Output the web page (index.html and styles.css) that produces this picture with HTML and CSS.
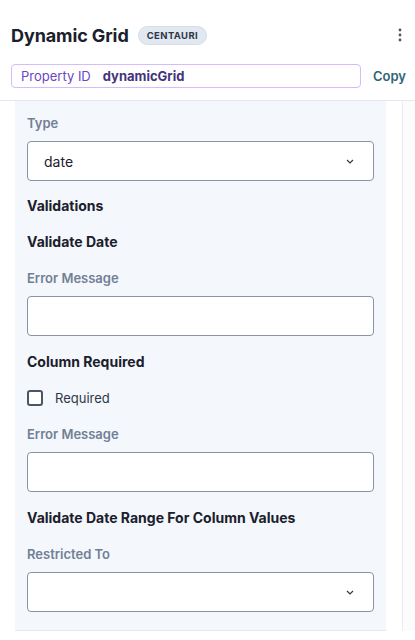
FILE: index.html
```html
<!DOCTYPE html>
<html lang="en">
<head>
    <meta charset="UTF-8">
    <meta name="viewport" content="width=device-width, initial-scale=1.0">
    <title>Dynamic Grid</title>
    <link rel="stylesheet" href="styles.css">
</head>
<body>
    <div class="header">
        <div class="title-row">
            <h1>Dynamic Grid</h1>
            <span class="badge">CENTAURI</span>
            <button class="kebab" aria-label="More">
                <svg width="4" height="14" viewBox="0 0 4 14"><circle cx="2" cy="2" r="1.4"/><circle cx="2" cy="7" r="1.4"/><circle cx="2" cy="12" r="1.4"/></svg>
            </button>
        </div>
        <div class="id-row">
            <div class="prop-id">
                <span class="prop-label">Property ID</span>
                <span class="prop-value">dynamicGrid</span>
            </div>
            <a class="copy" href="#">Copy</a>
        </div>
    </div>

    <div class="body">
        <div class="panel">
            <div class="form-group first">
                <label>Type</label>
                <div class="select">
                    <span>date</span>
                    <svg class="chev" width="8" height="5" viewBox="0 0 8 5"><path d="M1 1l3 3 3-3" fill="none" stroke="#2d3748" stroke-width="1.2"/></svg>
                </div>
            </div>
            <h3>Validations</h3>
            <h3>Validate Date</h3>
            <div class="form-group">
                <label>Error Message</label>
                <input type="text">
            </div>
            <h3>Column Required</h3>
            <label class="check">
                <span class="box"></span>
                Required
            </label>
            <div class="form-group">
                <label>Error Message</label>
                <input type="text">
            </div>
            <h3>Validate Date Range For Column Values</h3>
            <div class="form-group">
                <label>Restricted To</label>
                <div class="select">
                    <span></span>
                    <svg class="chev" width="8" height="5" viewBox="0 0 8 5"><path d="M1 1l3 3 3-3" fill="none" stroke="#2d3748" stroke-width="1.2"/></svg>
                </div>
            </div>
        </div>
        <div class="scroll-track"></div>
    </div>
</body>
</html>
```

FILE: styles.css
```css
body {
    font-family: Inter, "Liberation Sans", sans-serif;
    margin: 0;
    background-color: #fff;
    color: #1a202c;
}
.header {
    padding: 0 9px 12px 11px;
    border-bottom: 1px solid #e2e8f0;
}
.title-row {
    display: flex;
    align-items: center;
    height: 44px;
    padding-top: 13px;
}
h1 {
    font-size: 18px;
    font-weight: 700;
    margin: 0;
    letter-spacing: -0.1px;
}
.badge {
    margin-left: 9px;
    background-color: #e2e8f0;
    border: 1px solid #d5dde8;
    color: #2d3748;
    font-size: 9.5px;
    font-weight: 700;
    letter-spacing: 0.4px;
    padding: 3px 8px;
    border-radius: 10px;
}
.kebab {
    margin-left: auto;
    background: none;
    border: none;
    padding: 0 4px;
    fill: #4a5568;
    cursor: pointer;
    display: flex;
}
.id-row {
    display: flex;
    align-items: center;
    margin-top: 7px;
}
.prop-id {
    flex: 1;
    height: 22px;
    border: 1px solid #d6bcfa;
    border-radius: 4px;
    display: flex;
    align-items: center;
    padding-left: 9px;
    font-size: 13px;
}
.prop-label {
    color: #6b46c1;
    margin-right: 12px;
}
.prop-value {
    color: #44337a;
    font-weight: 700;
}
.copy {
    margin-left: 12px;
    color: #2f6675;
    font-weight: 600;
    font-size: 13px;
    text-decoration: none;
}
.body {
    display: flex;
    padding-left: 15px;
}
.panel {
    width: 348px;
    background-color: #f4f7fb;
    border-bottom: 1px solid #e2e8f0;
    padding: 12px 12px 18px 12px;
}
.scroll-track {
    margin-left: 16px;
    width: 12px;
    border-left: 1px solid #e9edf2;
    background-color: #fcfcfd;
}
.form-group {
    margin-bottom: 16px;
}
.form-group.first {
    margin-bottom: 15px;
}
.form-group:last-child {
    margin-bottom: 0;
}
label {
    display: block;
    font-size: 13px;
    font-weight: 600;
    color: #718096;
    line-height: 20px;
    margin-bottom: 8px;
}
h3 {
    font-size: 14px;
    font-weight: 700;
    line-height: 20px;
    margin: 0 0 16px 0;
}
.select,
input[type="text"] {
    box-sizing: border-box;
    width: 100%;
    height: 40px;
    border: 1px solid #8a94a3;
    border-radius: 4px;
    background-color: #fff;
    font-family: inherit;
    font-size: 14px;
    display: flex;
    align-items: center;
    justify-content: space-between;
    padding: 0 19px 0 16px;
}
.select span {
    color: #1a202c;
}
.check {
    display: flex;
    align-items: center;
    font-weight: 400;
    color: #2d3748;
    margin-bottom: 16px;
}
.box {
    width: 12px;
    height: 12px;
    border: 2px solid #4a5568;
    border-radius: 3px;
    background-color: #fff;
    margin-right: 12px;
}
```
